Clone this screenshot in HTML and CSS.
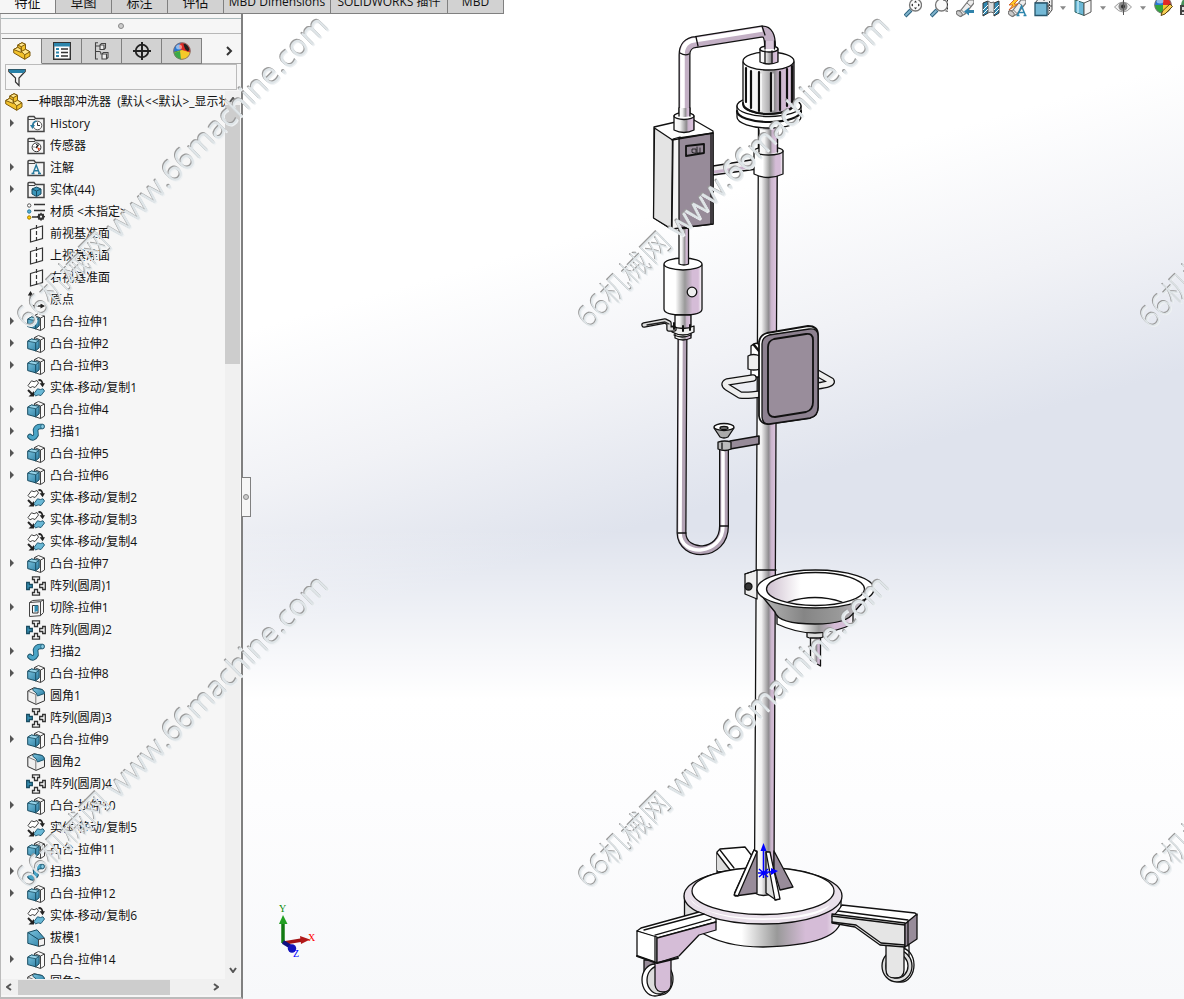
FILE: index.html
```html
<!DOCTYPE html>
<html lang="zh-CN">
<head>
<meta charset="utf-8">
<title>一种眼部冲洗器</title>
<link rel="stylesheet" href="styles.css">
</head>
<body>
<svg class="defs" aria-hidden="true">
  <defs>
    <linearGradient id="cyl"><stop offset="0" stop-color="#fff"/><stop offset=".3" stop-color="#f2f2f2"/><stop offset=".62" stop-color="#8d8b8e"/><stop offset=".72" stop-color="#c9b4cb"/><stop offset=".92" stop-color="#dcc3de"/><stop offset="1" stop-color="#8d7f8f"/></linearGradient>
    <linearGradient id="soft"><stop offset="0" stop-color="#fff"/><stop offset=".3" stop-color="#fff"/><stop offset=".55" stop-color="#999"/><stop offset=".75" stop-color="#d5bcd7"/><stop offset=".9" stop-color="#d5bcd7"/><stop offset="1" stop-color="#fff"/></linearGradient>
    <linearGradient id="cone"><stop offset="0" stop-color="#bbb"/><stop offset=".4" stop-color="#858585"/><stop offset=".7" stop-color="#999"/><stop offset="1" stop-color="#e0d2e1"/></linearGradient>
    <linearGradient id="bowl"><stop offset="0" stop-color="#cdbfce"/><stop offset=".35" stop-color="#fff"/><stop offset="1" stop-color="#fff"/></linearGradient>
    <linearGradient id="blue" x2="1" y2="1"><stop offset="0" stop-color="#7cc4df"/><stop offset="1" stop-color="#2c7ea3"/></linearGradient>
    <g id="folder"><path d="M1 16.500V2.500q0-1 1-1h5l1.500 2H17v13z" fill="#f4f4f4" stroke="#454545" stroke-width="1.500"/><path d="M1 4.500h7" stroke="#454545"/></g>
    <symbol id="i-part" viewBox="0 0 18 18"><g stroke="#7d5a0c" stroke-width="1" stroke-linejoin="round"><path fill="#f4c32c" d="M.7 7.500 4.700 5.300V3L9 .7l3.500 1.600v5L17 9.800v4.200l-5.300 3.300L.7 10.800z"/><path fill="#ffe68a" d="M4.700 3 9 .7l3.500 1.600L8.300 4.700zM.7 7.500l4-2.200 3.600 2v3.200zM8.300 9.500l4.200-2.200L17 9.800l-5.300 3z"/><path fill="none" d="M8.300 4.700v4.800M11.700 12.800v4.500"/></g></symbol>
    <symbol id="i-hist" viewBox="0 0 18 18"><use href="#folder"/><circle cx="10.500" cy="10.500" r="4.300" fill="#fff" stroke="#555"/><path d="M10.500 7.500v3h2.500" fill="none" stroke="#333"/><path d="M3 10h5l-2.500 4z" fill="#2c7ea3"/><path d="M5.500 11q0-4 4-5" fill="none" stroke="#2c7ea3" stroke-width="1.500"/></symbol>
    <symbol id="i-sens" viewBox="0 0 18 18"><use href="#folder"/><circle cx="9.500" cy="10.300" r="4.400" fill="#fff" stroke="#333"/><path d="M10 10l3 1.500-1.500 2.500z" fill="#e2451f"/><path d="M9 11l2.500-3.500" stroke="#222" stroke-width="1.500"/><path d="M6.500 10h1M9.500 7v1" stroke="#333"/></symbol>
    <symbol id="i-note" viewBox="0 0 18 18"><use href="#folder"/><path d="M6 14.500l3.200-8.500 3.300 8.500M7 11.800h4M4.500 14.500h3M11 14.500h3" fill="none" stroke="#27799c" stroke-width="1.400"/></symbol>
    <symbol id="i-body" viewBox="0 0 18 18"><use href="#folder"/><path d="M5 8l4.500-2L14 8v5l-4.500 2.500L5 13z" fill="#3a95b9" stroke="#164a60"/><path d="M5 8l4.500 2L14 8M9.500 10v5" fill="none" stroke="#164a60"/></symbol>
    <symbol id="i-mat" viewBox="0 0 18 18"><circle cx="2.200" cy="2.500" r="1.700" fill="#fff" stroke="#555"/><circle cx="2.200" cy="8.500" r="1.700" fill="#58b0d4" stroke="#27799c"/><circle cx="2.200" cy="14.500" r="1.700" fill="#fc0" stroke="#a67b00"/><path d="M7 1.500h11M7 7.500h11M5 14h6" stroke="#333" stroke-width="1.600"/><circle cx="14" cy="13.700" r="2.300" fill="none" stroke="#333" stroke-width="2"/><path d="M14 9.700v8M10 13.700h8M11.300 11l5.400 5.400M16.700 11l-5.400 5.400" stroke="#333" stroke-width="1.200"/><circle cx="14" cy="13.700" r="1.100" fill="#f6f6f6"/></symbol>
    <symbol id="i-plane" viewBox="0 0 18 18"><path d="M3.500 4.500l12-3.500v12.500l-12 3.500z" fill="#fafafa" stroke="#333" stroke-width="1.200"/><path d="M9.500 0v18" stroke="#333" stroke-width="1.200" stroke-dasharray="4 2"/></symbol>
    <symbol id="i-orig" viewBox="0 0 18 18"><path d="M3.500 2.500V13l3 2H16" fill="none" stroke="#222" stroke-width="1.500"/><path d="M.8 4.500 3.500 0l2.700 4.500zM13.500 12.500 18 15l-4.500 2.500z" fill="#222"/></symbol>
    <symbol id="i-ext" viewBox="0 0 18 18"><path d="M7.500 2.500l4-2 6 2.500v12l-4 2.500-6-2z" fill="#f8f8f8" stroke="#444"/><path d="M7.500 2.500l6 2.500 4-2M13.500 5v12.500" fill="none" stroke="#444"/><path d="M.7 6.200 4.300 4l7.900 1.300v7.500l-3.500 3L.7 13.600z" fill="url(#blue)" stroke="#164a60"/><path d="M.7 6.200l8 1.500 3.500-2.400-7.900-1.300z" fill="#9ad5ea" stroke="#164a60" stroke-width=".8"/><path d="M8.700 7.700v8" stroke="#164a60"/></symbol>
    <symbol id="i-move" viewBox="0 0 18 18"><path d="M1 6.500 4.500 1.800q2.500 2 5.500-.3l1.500 2.500-3.500 4.500q-2.500-2-5 .3z" fill="#fff" stroke="#444"/><path d="M7 14.500 10.500 9.800q3 1.500 5.500 0L17.500 12l-3.500 4.500q-3-1.500-5.500.5z" fill="#69b8d6" stroke="#27607a"/><path d="M11.500 1q4-.3 4 4.500" fill="none" stroke="#222" stroke-width="1.800"/><path d="M12.600 4.300h5.400l-2.400 4zM1.500 17.500h5.500v-5.500z" fill="#222"/><path d="M1 11l5 5" stroke="#222" stroke-width="2"/></symbol>
    <symbol id="i-sweep" viewBox="0 0 18 18"><path d="M3 13.500q3.500 3.500 6-1.500 0-2-.5-5 1-4 6.500-3.500" fill="none" stroke="#194f66" stroke-width="5.500" stroke-linecap="round"/><path d="M3 13.500q3.500 3.500 6-1.500 0-2-.5-5 1-4 6.500-3.500" fill="none" stroke="#4ba5c7" stroke-width="3.700" stroke-linecap="round"/><ellipse cx="15.500" cy="3.500" rx="1.800" ry="2.200" fill="#86cbe4" stroke="#194f66" stroke-width=".7"/></symbol>
    <symbol id="i-pat" viewBox="0 0 20 20"><g fill="#fff" stroke="#333" stroke-width="1.300"><path d="M6.500.8h7v2.700h-2v3h-3v-3h-2z"/><path d="M6.500 19.200h7v-2.700h-2v-3h-3v3h-2z"/><path d="M19.300 6.500v7h-2.600v-2h-3v-3h3v-2z"/><path fill="#3b96ba" stroke="#164a60" d="M.7 6.500v7h2.600v-2h3v-3h-3v-2z"/></g></symbol>
    <symbol id="i-cut" viewBox="0 0 18 18"><path d="M2.500 3.500l3-2L16.500.8v12.700l-3 3.200-11 .8z" fill="#f5f5f5" stroke="#444"/><path d="M2.500 3.500l11-.8v14M13.500 2.700l3-1.900" fill="none" stroke="#444"/><path d="M5.500 6.500h5.500V14H5.500z" fill="#fff" stroke="#333"/><path d="M7.500 6.500H11V12l-3.500 1z" fill="#318db3"/></symbol>
    <symbol id="i-fil" viewBox="0 0 18 18"><path d="M.8 4 7 .7l8 1.800q2.500 1.500 2.500 4v7.300L9 17.400.8 13.500z" fill="#f0f0f0" stroke="#333"/><path d="M.8 4l8 3.500V17.400" fill="none" stroke="#777"/><path d="M7.500 1l7.500 1.500q2.500 1.500 2.500 4l-7 2.500Q10.500 6 5.500 3z" fill="url(#blue)" stroke="#1b5871"/></symbol>
    <symbol id="i-draft" viewBox="0 0 18 18"><path d="M.8 3.500 10 .8l7.500 8.500v6.500l-6 1.500-10.700-3z" fill="url(#blue)" stroke="#164a60"/><path d="M11.500 10.500l6-1.200v6.500l-6 1.500z" fill="#f3f3f3" stroke="#444"/><path d="M.8 3.500l10.700 7" stroke="#164a60"/></symbol>
    <symbol id="i-list" viewBox="0 0 18 18"><path d="M.7.7h16.600v16.600H.7z" fill="#fff" stroke="#333" stroke-width="1.400"/><path d="M1 1h16v3.500H1z" fill="#2c85ac"/><path d="M3 7h3M3 10.500h3M3 14h3" stroke="#2c85ac" stroke-width="2"/><path d="M8 7h7M8 10.500h7M8 14h7" stroke="#333" stroke-width="1.300"/></symbol>
    <symbol id="i-conf" viewBox="0 0 18 18"><g fill="#eee" stroke="#444" stroke-width="1.100"><path d="M5 .8H2.500V17H5M3 9.500h3.500q1.500 0 1.500 3M3 4h4" fill="none"/><path d="M7 3l1.500-1.500h4V6L11 7.500H7z"/><path d="M9 12l1.500-1.500H15v5L13.500 17H9z"/><path d="M7 3h4v4.500M9 12h4.500v5" fill="none"/></g></symbol>
    <symbol id="i-cross" viewBox="0 0 18 18"><circle cx="9" cy="9" r="6.300" fill="none" stroke="#222" stroke-width="1.800"/><path d="M9 0v18M0 9h18" stroke="#222" stroke-width="2"/></symbol>
    <symbol id="i-ball" viewBox="0 0 18 18"><path d="M9 9V.5A8.500 8.500 0 0 0 .5 9z" fill="#2678d7"/><path d="M9 9V.5A8.500 8.500 0 0 1 17.500 9z" fill="#df2a26"/><path d="M9 9h8.500A8.500 8.500 0 0 1 9 17.500z" fill="#f6c928"/><path d="M9 9v8.500A8.500 8.500 0 0 1 .5 9z" fill="#31a63f"/><ellipse cx="6" cy="5" rx="3.500" ry="2.500" fill="#fff" opacity=".5"/><circle cx="9" cy="9" r="8.300" fill="none" stroke="#777"/></symbol>
    <symbol id="i-swirl" viewBox="0 0 18 18"><circle cx="9" cy="9" r="8.500" fill="#df2a26"/><path d="M.5 10A8.500 8.500 0 0 1 8 .6Q4 6 9 8z" fill="#2678d7"/><path d="M.5 10l8.500-2v9.500A8.500 8.500 0 0 1 .5 10z" fill="#31a63f"/><path d="M.8 11 9 8l8.400 2.500A8.500 8.500 0 0 1 9 17.500Q3 17 .8 11z" fill="#f6c928"/><path d="M.8 11A8.500 8.500 0 0 0 8 17.400L7 9z" fill="#3aaa46"/><path d="M10.500 1.500q4 0 6 6l-1.500 2q-4-2-4.500-8z" fill="#222"/><ellipse cx="6" cy="5" rx="3" ry="2.500" fill="#fff" opacity=".5"/><circle cx="9" cy="9" r="8.300" fill="none" stroke="#777" stroke-width=".8"/></symbol>
    <symbol id="i-mag" viewBox="0 0 18 18"><path d="M1 16l6-6" stroke="#2d6481" stroke-width="4"/><path d="M1.500 15.500l5-5" stroke="#83b6ce" stroke-width="1.800"/><circle cx="11.500" cy="5" r="6" fill="#fafafa" stroke="#777" stroke-width="1.300"/></symbol>
    <symbol id="i-torch" viewBox="0 0 18 18"><path d="M.8 11.500l4.200-1.500L13 0h5v3L9 14l-4.500 2.500z" fill="#eee" stroke="#777" stroke-width="1.200"/><ellipse cx="3.300" cy="13.500" rx="3.300" ry="2.200" fill="#ccc" stroke="#777" transform="rotate(40 3.300 13.500)"/><path d="M5.500 10l3.500 3.500M11 3l4 3.500" stroke="#777"/></symbol>
    <symbol id="i-down" viewBox="0 0 8 5"><path d="M0 0h8L4 5z" fill="#8a8a8a"/></symbol>
  </defs>
</svg>

<div class="app">
  <header class="top">
    <nav class="tabs" aria-label="命令管理器">
      <button class="tab active">特征</button><button class="tab">草图</button><button class="tab">标注</button><button class="tab">评估</button><button class="tab wide">MBD Dimensions</button><button class="tab wider">SOLIDWORKS 插件</button><button class="tab small">MBD</button>
    </nav>
    <div class="toolbar">
      <button class="tool" aria-label="整屏显示全图"><svg class="ic"><use href="#i-mag"/><path d="M7 5l2-1.500v3zM16 5l-2-1.500v3zM11.500.5 10 2.500h3zM11.500 9.500 10 7.500h3z" fill="#333"/></svg></button>
      <button class="tool" aria-label="局部放大"><svg class="ic"><use href="#i-mag"/><path d="M13 0h4.500v12M17.500 11H14" fill="none" stroke="#333" stroke-dasharray="2 2"/></svg></button>
      <button class="tool" aria-label="上一视图"><svg class="ic"><use href="#i-torch"/><path d="M8 11.500l5-4v2.500h5v3h-5v2.500z" fill="#3183ab"/></svg></button>
      <button class="tool" aria-label="剖面视图"><svg class="ic"><path d="M1 3l5-2v12l-5 3zM12 3l5-2v12l-5 3z" fill="#318ab3" stroke="#333"/><path d="M6 1q3 3 6 1v11q-3-2-6 0z" fill="#ddd" stroke="#666"/><path d="M1 10l5-5M1 14l5-5M12 10l5-5M12 14l5-5" stroke="#fff"/></svg></button>
      <button class="tool" aria-label="动态注解视图"><svg class="ic"><use href="#i-torch"/><path d="M8-2 1 5h4L1 10l9-6H6l6-6z" fill="#ffca28" stroke="#c84c1c" stroke-width=".8"/><path d="M9.500 15.500 13.500 6l4 9.500M11 12.500h5M8.500 15.500h3M15.500 15.500h3" fill="none" stroke="#2d86ad" stroke-width="1.500"/></svg></button>
      <button class="tool drop" aria-label="视图定向"><svg class="ic"><path d="M6-3h12V10L14 15V3H1z" fill="#eee" stroke="#444"/><path d="M1 3h12v12.500H1z" fill="#74b9d6" stroke="#27566c" stroke-width="1.300"/><path d="M13 6h5M10-1v3M15.500 1v10" stroke="#444" stroke-dasharray="2 1"/></svg><svg class="caret"><use href="#i-down"/></svg></button>
      <button class="tool drop" aria-label="显示样式"><svg class="ic"><path d="M1 0 10 3v12.500L1 12z" fill="#6bb8d7" stroke="#366"/><path d="M10 3l7-3v12l-7 3.500z" fill="#f6f6f6" stroke="#555"/><path d="M4 1v12" stroke="#a9dced" stroke-width="2"/></svg><svg class="caret"><use href="#i-down"/></svg></button>
      <button class="tool drop" aria-label="隐藏/显示项目"><svg class="ic"><path d="M.5 7Q9-3 17.500 7 9 17 .5 7z" fill="#f2f2f2" stroke="#999"/><circle cx="9" cy="6.500" r="4.500" fill="#888"/><circle cx="9" cy="6.500" r="2" fill="#333"/><path d="M9.500-1v16" stroke="#555"/></svg><svg class="caret"><use href="#i-down"/></svg></button>
      <button class="tool" aria-label="编辑外观"><svg class="ic"><use href="#i-ball" y="-4"/><path d="M7 15.500l1.500-4.500 7.500-7 2.500 2.500-7.500 7.500z" fill="#f7cf55" stroke="#5d4511"/></svg></button>
      <button class="tool" aria-label="应用布景"><svg class="ic"><circle cx="9" cy="5" r="8" fill="#47915c"/><path d="M0 5h18v10H0z" fill="#444"/><path d="M2 7h3v3H2zM2 12h3v2H2z" fill="#ddd"/></svg></button>
    </div>
  </header>

  <aside class="panel">
    <div class="grip"><i class="dot"></i></div>
    <div class="ptabs">
      <button class="ptab on" aria-label="特征树"><svg class="ic"><use href="#i-part"/></svg></button><button class="ptab" aria-label="属性"><svg class="ic"><use href="#i-list"/></svg></button><button class="ptab" aria-label="配置"><svg class="ic"><use href="#i-conf"/></svg></button><button class="ptab" aria-label="尺寸专家"><svg class="ic"><use href="#i-cross"/></svg></button><button class="ptab" aria-label="外观"><svg class="ic"><use href="#i-swirl"/></svg></button>
      <button class="more" aria-label="更多"><svg width="7" height="10"><path d="M1 1l4 4-4 4" fill="none" stroke="#333" stroke-width="2"/></svg></button>
    </div>
    <div class="filter"><svg class="ic"><path d="M.8 1.500h16.400v2L11 10v7.500L7.500 14v-4L.8 3.500z" fill="#f6f6f6" stroke="#333" stroke-width="1.200"/><path d="M1 1.500h16v2l-2 1.500H3L1 3.500z" fill="#2781a8"/></svg><input aria-label="过滤器" type="text"></div>
    <div class="tree">
      <div class="scroll">
        <div class="root"><svg class="ic"><use href="#i-part"/></svg><span>一种眼部冲洗器&nbsp; (默认&lt;&lt;默认&gt;_显示状态 1&gt;)</span></div>
        <ul class="items">
          <li class="has"><svg class="ic"><use href="#i-hist"/></svg>History</li>
          <li><svg class="ic"><use href="#i-sens"/></svg>传感器</li>
          <li class="has"><svg class="ic"><use href="#i-note"/></svg>注解</li>
          <li class="has"><svg class="ic"><use href="#i-body"/></svg>实体(44)</li>
          <li><svg class="ic"><use href="#i-mat"/></svg>材质 &lt;未指定&gt;</li>
          <li><svg class="ic"><use href="#i-plane"/></svg>前视基准面</li>
          <li><svg class="ic"><use href="#i-plane"/></svg>上视基准面</li>
          <li><svg class="ic"><use href="#i-plane"/></svg>右视基准面</li>
          <li><svg class="ic"><use href="#i-orig"/></svg>原点</li>
          <li class="has"><svg class="ic"><use href="#i-ext"/></svg>凸台-拉伸1</li>
          <li class="has"><svg class="ic"><use href="#i-ext"/></svg>凸台-拉伸2</li>
          <li class="has"><svg class="ic"><use href="#i-ext"/></svg>凸台-拉伸3</li>
          <li><svg class="ic"><use href="#i-move"/></svg>实体-移动/复制1</li>
          <li class="has"><svg class="ic"><use href="#i-ext"/></svg>凸台-拉伸4</li>
          <li class="has"><svg class="ic"><use href="#i-sweep"/></svg>扫描1</li>
          <li class="has"><svg class="ic"><use href="#i-ext"/></svg>凸台-拉伸5</li>
          <li class="has"><svg class="ic"><use href="#i-ext"/></svg>凸台-拉伸6</li>
          <li><svg class="ic"><use href="#i-move"/></svg>实体-移动/复制2</li>
          <li><svg class="ic"><use href="#i-move"/></svg>实体-移动/复制3</li>
          <li><svg class="ic"><use href="#i-move"/></svg>实体-移动/复制4</li>
          <li class="has"><svg class="ic"><use href="#i-ext"/></svg>凸台-拉伸7</li>
          <li class="pat"><svg class="ic"><use href="#i-pat"/></svg>阵列(圆周)1</li>
          <li class="has"><svg class="ic"><use href="#i-cut"/></svg>切除-拉伸1</li>
          <li class="pat"><svg class="ic"><use href="#i-pat"/></svg>阵列(圆周)2</li>
          <li class="has"><svg class="ic"><use href="#i-sweep"/></svg>扫描2</li>
          <li class="has"><svg class="ic"><use href="#i-ext"/></svg>凸台-拉伸8</li>
          <li><svg class="ic"><use href="#i-fil"/></svg>圆角1</li>
          <li class="pat"><svg class="ic"><use href="#i-pat"/></svg>阵列(圆周)3</li>
          <li class="has"><svg class="ic"><use href="#i-ext"/></svg>凸台-拉伸9</li>
          <li><svg class="ic"><use href="#i-fil"/></svg>圆角2</li>
          <li class="pat"><svg class="ic"><use href="#i-pat"/></svg>阵列(圆周)4</li>
          <li class="has"><svg class="ic"><use href="#i-ext"/></svg>凸台-拉伸10</li>
          <li><svg class="ic"><use href="#i-move"/></svg>实体-移动/复制5</li>
          <li class="has"><svg class="ic"><use href="#i-ext"/></svg>凸台-拉伸11</li>
          <li class="has"><svg class="ic"><use href="#i-sweep"/></svg>扫描3</li>
          <li class="has"><svg class="ic"><use href="#i-ext"/></svg>凸台-拉伸12</li>
          <li><svg class="ic"><use href="#i-move"/></svg>实体-移动/复制6</li>
          <li><svg class="ic"><use href="#i-draft"/></svg>拔模1</li>
          <li class="has"><svg class="ic"><use href="#i-ext"/></svg>凸台-拉伸14</li>
          <li><svg class="ic"><use href="#i-fil"/></svg>圆角3</li>
        </ul>
      </div>
      <div class="vbar">
        <svg width="8" height="6"><path d="M1 5l3-4 3 4" fill="none" stroke="#555" stroke-width="2"/></svg>
        <div class="vtrack"><div class="vthumb"></div></div>
        <svg width="8" height="6"><path d="M1 1l3 4 3-4" fill="none" stroke="#555" stroke-width="2"/></svg>
      </div>
    </div>
    <div class="hbar">
      <svg width="6" height="8"><path d="M5 1L1 4l4 3" fill="none" stroke="#555" stroke-width="2"/></svg>
      <div class="htrack"><div class="hthumb"></div></div>
      <svg width="6" height="8"><path d="M1 1l4 3-4 3" fill="none" stroke="#555" stroke-width="2"/></svg>
    </div>
  </aside>

  <main class="view">
    <button class="handle" aria-label="折叠面板"><i class="dot"></i></button>
    <svg class="scene" viewBox="243 14 941 985" preserveAspectRatio="xMidYMid meet" role="img" aria-label="眼部冲洗器模型">
      <g stroke="#111" stroke-width="1.300" stroke-linejoin="round" stroke-linecap="round">
        <!-- back leg -->
        <path d="M717 872v-20l3-3 25-2 7 9v14z" fill="#fff"/><path d="M717 853l14 17h-14z" fill="#ddd" stroke="none"/><path d="M717 853l13 17M720 850l14 18"/>
        <path d="M684.500 896v22l14 8v-25z" fill="#ddd"/>
        <!-- base -->
        <path d="M699 902v29q24 16 64 16 78-2 78-29v-20z" fill="url(#soft)"/>
        <ellipse cx="763" cy="896" rx="79" ry="28" fill="#e9e0ea"/>
        <path d="M690 899a74 23 0 0 0 140 6q-10 14-67 15-55-1-73-21z" fill="#fff" stroke="none"/>
        <ellipse cx="763" cy="891" rx="71" ry="23.500" fill="#fff"/>
        <!-- right leg and caster -->
        <ellipse cx="901" cy="965" rx="13" ry="17" fill="#fff"/><ellipse cx="897" cy="966" rx="15" ry="16" fill="#ddd"/><ellipse cx="897" cy="966" rx="11" ry="12" fill="#fff"/>
        <path d="M886 944v26q0 8 9 8t9-8v-26z" fill="#e6e6e6"/><path d="M909 944v12"/>
        <path d="M842 905l73 8 2 2-12 9-73-7q5-4 10-12z" fill="#fff"/>
        <path d="M832 914l73 9v24l-25-2-25-18-23-4z" fill="#e5e5e5"/>
        <path d="M838 911l70 9M832 916l73 9M832 922l24 3 25 18 24 2" fill="none"/>
        <path d="M905 924l12-10v25l-12 8z" fill="#988c9a"/><path d="M908 922v24"/>
        <!-- left leg and caster -->
        <path d="M644 960v14h12v-14z" fill="#978b99"/><ellipse cx="660" cy="979" rx="13" ry="16" fill="#e5e5e5"/><ellipse cx="655" cy="980" rx="13" ry="16" fill="#fff"/><ellipse cx="659" cy="980" rx="12" ry="14" fill="#ddd"/>
        <path d="M655 958v27q1 7 8 7t8-7v-27z" fill="#d5bdd7"/>
        <path d="M637 931l4-3 58-16 17 7v3l-58 16z" fill="#fff"/><path d="M644 930l60-16M655 935l56-16" fill="none"/>
        <path d="M637 931l20 6v26l-20-7z" fill="#fff"/><path d="M657 938l59-16v8l-17 5-20 21-22 7z" fill="#d5bdd7"/><path d="M655 937v24"/><path d="M637 956l20 7 21-5" fill="none" stroke-width="2"/>
        <!-- pole -->
        <path d="M758.500 126l-1.500 300-2.500 447v20q9 5 18 0l1.500-20 2-447 1.500-300z" fill="url(#cyl)"/>
        <!-- gussets -->
        <path d="M754 850l3 1v42l-22 3-.5-3z" fill="#988c9a"/><path d="M754 850l3 2-19 44-4-1z" fill="#fff"/>
        <path d="M774 851l19 36-13 3-6-20z" fill="#988c9a"/>
        <path d="M766 852v41l10 7-6-47z" fill="#ddd"/><path d="M766 852h4l10 47-5 1z" fill="#fff"/>
        <!-- top pipe -->
        <path d="M684.500 120V55Q684.500 43 696 42L762 31.500Q770 31 770 46" fill="none" stroke-width="12" stroke-linecap="butt"/>
        <path d="M684.500 120V55Q684.500 43 696 42L762 31.500Q770 31 770 46" fill="none" stroke="#c3b0c5" stroke-width="9.500" stroke-linecap="butt"/>
        <path d="M682.500 120V55Q682.500 41 696 40L762 29.500" fill="none" stroke="#fff" stroke-width="4.500" stroke-linecap="butt"/>
        <path d="M680 53q5 3 9 1M696 37l2 9M762 26l3 9M766 42h8" fill="none"/>
        <!-- motor -->
        <path d="M737 106v11a32 11 0 0 0 64 0v-11z" fill="#fff"/><ellipse cx="769" cy="106" rx="32" ry="10.500" fill="#fff"/><path d="M737 111a32 11 0 0 0 64 0" fill="none" stroke-width="2.200"/>
        <path d="M743 62v43a25.500 9 0 0 0 51 0V62z" fill="url(#cyl)"/><path d="M743 103a25.500 11 0 0 0 51 0" fill="none" stroke-width="2"/>
        <path d="M746 68v34M751 71v37M759 72v39M771 73v38M780 72v38M787 69v37M792 66v36" stroke-width="2.200"/>
        <path d="M748 71v33M761 74v36M773 74v36" stroke="#fff"/>
        <ellipse cx="768.500" cy="61" rx="25.500" ry="9" fill="#fff"/>
        <path d="M760 49v13q9 4 18 0V49z" fill="url(#cyl)"/><ellipse cx="769" cy="49" rx="9" ry="3" fill="#fff"/><path d="M765 51v12M772 51v12"/><path d="M765 41v8h9.500v-8z" fill="#d6c5d8" stroke="none"/><path d="M765 41v8M774.500 41v8"/>
        <!-- side pipe and collar -->
        <path d="M713 166l44-7v10l-44 6z" fill="#eee"/><path d="M714 172l43-6" stroke="#c9b1cb" stroke-width="3"/>
        <path d="M754 151v23q14.500 7 29 0v-23z" fill="url(#soft)"/><ellipse cx="768.500" cy="151" rx="14.500" ry="4" fill="#eee"/><path d="M759 130v22q9 4 18.500 0v-22z" fill="url(#cyl)" stroke="none"/><path d="M759 130v22M777.500 130v22"/>
        <!-- control box -->
        <path d="M654 127l26-6 14-1 19 11v93l-42 5-17-11z" fill="#fff"/><path d="M654.500 128l18 12-1 89-18-11z" fill="#e4e4e4"/>
        <path d="M673 139l7-2v91l-8 1z" fill="#f4f4f4"/><path d="M679 138l34-5v91l-34 4z" fill="#978b99"/><path d="M711 134v90"/><path d="M672 140l41-7" />
        <path d="M686 146l18-2v9l-18 3z" fill="#978b99" stroke-width="1.800"/><path d="M692 152v-3h4v4zm5-5v6h3v-5" fill="none" stroke-width=".8"/>
        <path d="M674 116v14q10 5 20 0v-14z" fill="url(#cyl)"/><ellipse cx="684" cy="116" rx="10" ry="3.500" fill="#fff"/><path d="M679 108v8q5 2 11 0v-8z" fill="url(#cyl)" stroke="none"/><path d="M679 108v8M690 108v8"/>
        <!-- canister -->
        <path d="M664 265v44q0 6 19 6t19-6v-44z" fill="url(#soft)"/><ellipse cx="683" cy="264" rx="19" ry="6" fill="#fff"/><path d="M679 229v35q5 2 9.500 0v-36z" fill="url(#cyl)"/><circle cx="692" cy="292" r="4.800" fill="#eee"/>
        <!-- hose -->
        <path d="M682.500 336L681.500 533C682 557 724 557 724 526V444" fill="none" stroke-width="10" stroke-linecap="butt"/>
        <path d="M682.500 336L681.500 533C682 557 724 557 724 526V444" fill="none" stroke="#b3a3b5" stroke-width="7.500" stroke-linecap="butt"/>
        <path d="M681 336L680 533C681 558 723 555 723 526V444" fill="none" stroke="#fff" stroke-width="3.500" stroke-linecap="butt"/><path d="M678 533h8M720 526h8"/>
        <!-- valve -->
        <path d="M675 315v23q8 4 16 0v-23z" fill="url(#cyl)"/><path d="M672 326q11 5 22 0v6q-11 6-22 0zM674 335q8 4 17 0" fill="#eee"/>
        <path d="M674 329h-5v-6l-4-2-21 4" fill="none" stroke-width="5.500"/><path d="M674 329h-5v-6l-4-2-21 4" fill="none" stroke="#ddd" stroke-width="3"/><path d="M669 324l-4-2-18 3" stroke="#222" fill="none"/><path d="M674 323v6M683 326v5M690 325v5" stroke-width="2"/>
        <!-- funnel -->
        <path d="M730 441l29-5v8l-29 5z" fill="#978b99" stroke-width="1.600"/><path d="M714 428l6 9q4 2 8 0l6-9z" fill="#aaa"/><ellipse cx="724" cy="427" rx="10" ry="3.500" fill="#fff"/><ellipse cx="724" cy="428" rx="4" ry="1.500" fill="#888"/><path d="M718 442v7q7 3 13 0v-7q-6-2-13 0z" fill="#bbb"/><path d="M722 443v6"/>
        <!-- screen -->
        <path d="M751 346q5-5 9-1v32h-9z" fill="#fff"/><path d="M748 356q5-3 12 0v13q-7 2-12 0z" fill="#eee"/><path d="M754 345l5 6" stroke-width="2.500"/>
        <g fill="none"><path d="M753 378l-26 4q-4 2 0 5l13 8q6 1 21-1" stroke-width="7.500"/><path d="M753 378l-26 4q-4 2 0 5l13 8q6 1 21-1" stroke="#eee" stroke-width="5"/><path d="M817 373l14 8q2 3-14 5" stroke-width="7.500"/><path d="M817 373l14 8q2 3-14 5" stroke="#eee" stroke-width="5"/></g>
        <path d="M759 416v-74q1-7 8-9l41-7q10 0 10 9v72q0 9-8 11l-42 6q-8 0-9-8z" fill="#fff" stroke-width="1.800"/>
        <path d="M762 416v-72q0-7 7-9l40-6q9-1 9 7v71q0 9-8 11l-41 6q-7 0-7-8z" fill="#8d8190"/>
        <path d="M768 410v-63q0-6 6-8l32-5q7-1 7 6v62q0 8-7 10l-31 5q-7 0-7-7z" fill="#998d9b" stroke-width="1.800"/>
        <!-- basin -->
        <path d="M745 574l12-4v29l-12-5z" fill="#eee"/><path d="M745 574l12-4h19" fill="none"/><circle cx="748.500" cy="586.500" r="3.500" fill="#333"/>
        <path d="M807 632v5q8 4 16 0v-5z" fill="#ddd"/><path d="M810.500 638v22l10 6v-28z" fill="url(#cyl)"/>
        <path d="M777 612v12q38 18 76 0v-12z" fill="url(#soft)"/><path d="M757 590l18 22q3 12 40 12 33 0 39-12l20-22z" fill="url(#cone)"/>
        <ellipse cx="815.500" cy="589" rx="58.500" ry="19" fill="#fff"/><ellipse cx="815.500" cy="589" rx="49" ry="16.500" fill="url(#bowl)"/><path d="M788 602q27-9 54 0" fill="none"/>
      </g>
      <g fill="#00f" stroke="#00f" stroke-width="1.500"><path d="M763.500 872v-22M763 872.500l12-1M759 869l9 8M768 869l-9 8M763.500 868v10M758 873h10"/><path d="M760.500 851h6l-3-8zM771 868v7l7-4z" stroke="none"/></g>
      <g class="axis">
        <path d="M283 943v-22" stroke="#127a12" stroke-width="3.500"/><path d="M279 924l4-9 4.500 9z" fill="#22a022"/><path d="M284 943l18-3" stroke="#a11414" stroke-width="3.500"/><path d="M300 936l10 3.500-9 4.500z" fill="#b21919"/><path d="M283 942l8 5" stroke="#101080" stroke-width="4"/><circle cx="292" cy="948.500" r="4.200" fill="#1414b8"/>
        <text x="279" y="912" fill="#0a8a0a">Y</text><text x="308" y="941" fill="#f00">X</text><text x="293" y="957" fill="#00f">Z</text>
      </g>
    </svg>
  </main>

  <svg class="marks" aria-hidden="true">
    <g class="mark"><text transform="translate(28 330) rotate(-45)">66机械网 <tspan class="site">www.66machine.com</tspan></text></g>
    <g class="mark"><text transform="translate(28 890) rotate(-45)">66机械网 <tspan class="site">www.66machine.com</tspan></text></g>
    <g class="mark"><text transform="translate(589 330) rotate(-45)">66机械网 <tspan class="site">www.66machine.com</tspan></text></g>
    <g class="mark"><text transform="translate(589 890) rotate(-45)">66机械网 <tspan class="site">www.66machine.com</tspan></text></g>
    <g class="mark"><text transform="translate(1151 330) rotate(-45)">66机械网</text></g>
    <g class="mark"><text transform="translate(1151 890) rotate(-45)">66机械网</text></g>
  </svg>
</div>
</body>
</html>
```

FILE: styles.css
```css
* { box-sizing: border-box; }
body {
  margin: 0;
  font: 12px/22px "Open Sans", "Noto Sans CJK SC", sans-serif;
  color: #111;
}
button { font: inherit; color: inherit; border: 0; padding: 0; margin: 0; background: none; }
.defs { position: absolute; width: 0; height: 0; }
.ic { width: 18px; height: 18px; flex: none; display: block; overflow: visible; }

.app {
  position: relative;
  display: grid;
  grid-template: 14px minmax(0, 1fr) / 243px minmax(0, 1fr);
  height: 100vh;
  overflow: hidden;
  background:
    linear-gradient(180deg, rgba(255,255,255,0) 53%, #fff 70%, #fdfdfe 80%, #f7f8fa 100%),
    linear-gradient(164deg, #fff 30%, #f1f2f6 42%, #dfe3ed 53%);
}

.top { grid-column: 1 / -1; display: flex; justify-content: space-between; z-index: 2; }
.tabs { display: flex; height: 14px; overflow: hidden; align-items: flex-end; }
.tab {
  flex: none;
  width: 56px;
  height: 24px;
  font-size: 13px;
  line-height: 22px;
  background: #d2d2d2;
  border-right: 1px solid #808080;
  border-bottom: 1px solid #808080;
  white-space: nowrap;
}
.tab.active { background: #f6f6f6; }
.tab.wide { width: 107px; font-size: 12px; }
.tab.wider { width: 117px; font-size: 12px; }
.tab.small { font-size: 12px; }
.toolbar { display: flex; width: 280px; height: 20px; overflow: hidden; }
.tool { display: flex; flex: none; width: 26px; height: 20px; align-items: flex-start; }
.tool.drop { width: 40px; gap: 8px; }
.caret { width: 6px; height: 4px; margin-top: 6px; }

.panel {
  display: flex;
  flex-direction: column;
  min-height: 0;
  background: #f6f6f6;
  border-left: 1px solid #bbb;
  border-right: 2px solid #808080;
  border-bottom: 2px solid #bbb;
}
.grip {
  height: 16px;
  margin: 4px 0;
  flex: none;
  display: flex;
  justify-content: center;
  padding-top: 4px;
  border-top: 1px solid #aab8bb;
  border-bottom: 1px solid #b8b8b8;
}
.dot { width: 6px; height: 6px; border: 1px solid #888; border-radius: 50%; background: #ccc; }
.ptabs { display: flex; flex: none; height: 26px; margin-left: 1px; border-bottom: 1px solid #aaa; }
.ptab {
  width: 40px;
  height: 26px;
  display: grid;
  place-items: center;
  background: #d2d2d2;
  border: 1px solid #808080;
  border-left: 0;
}
.ptab.on { background: #f6f6f6; border-bottom-color: #f6f6f6; }
.more { flex: 1; display: grid; place-items: center; padding-left: 16px; }
.filter {
  display: flex;
  align-items: center;
  flex: none;
  height: 26px;
  margin: 0 4px 1px;
  padding-left: 2px;
  border: 1px solid #bbb;
}
.filter input { flex: 1; min-width: 0; border: 0; background: none; outline: none; font: inherit; }

.tree { flex: 1; min-height: 0; display: flex; margin-right: 1px; }
.scroll { flex: 1; min-width: 0; overflow: hidden; white-space: nowrap; }
.root { display: flex; align-items: center; gap: 4px; height: 22px; margin-left: 4px; }
.items { list-style: none; margin: 0; padding: 0; }
.items li { display: flex; align-items: center; gap: 5px; height: 22px; padding-left: 26px; position: relative; }
.items .pat { padding-left: 25px; gap: 4px; }
.items .pat .ic { width: 20px; height: 20px; }
.items .has::before {
  content: "";
  position: absolute;
  left: 9px;
  top: 6px;
  border: 4px solid transparent;
  border-left: 4px solid #555;
  border-right: 0;
}
.vbar { width: 15px; display: flex; flex-direction: column; align-items: center; padding: 6px 0; background: #f0f0f0; }
.vtrack { flex: 1; align-self: stretch; padding-top: 2px; }
.vthumb { height: 30%; background: #cdcdcd; }
.hbar { height: 16px; flex: none; display: flex; align-items: center; padding: 0 22px 0 5px; margin-bottom: 2px; background: #f0f0f0; }
.htrack { flex: 1; padding: 0 43px 0 6px; }
.hthumb { height: 15px; background: #cdcdcd; }

.view { position: relative; min-width: 0; min-height: 0; }
.scene { display: block; width: 100%; height: 100%; }
.handle {
  position: absolute;
  left: -1px;
  top: 47%;
  width: 9px;
  height: 40px;
  display: grid;
  place-items: center;
  background: #f6f6f6;
  border: 1px solid #808080;
  border-left: 0;
}
.axis text { font: 10px "Liberation Serif", serif; }
.marks { position: absolute; inset: 0; width: 100%; height: 100%; pointer-events: none; z-index: 3; }
.mark { filter: drop-shadow(-1px -1px 0 #999) drop-shadow(1px 1px 0 #eef1f3); }
.mark text { font: 300 29px "Open Sans", "Noto Sans CJK SC", sans-serif; fill: #dfe5e8; }
.mark .site { font-size: 30px; font-weight: 400; }
```
